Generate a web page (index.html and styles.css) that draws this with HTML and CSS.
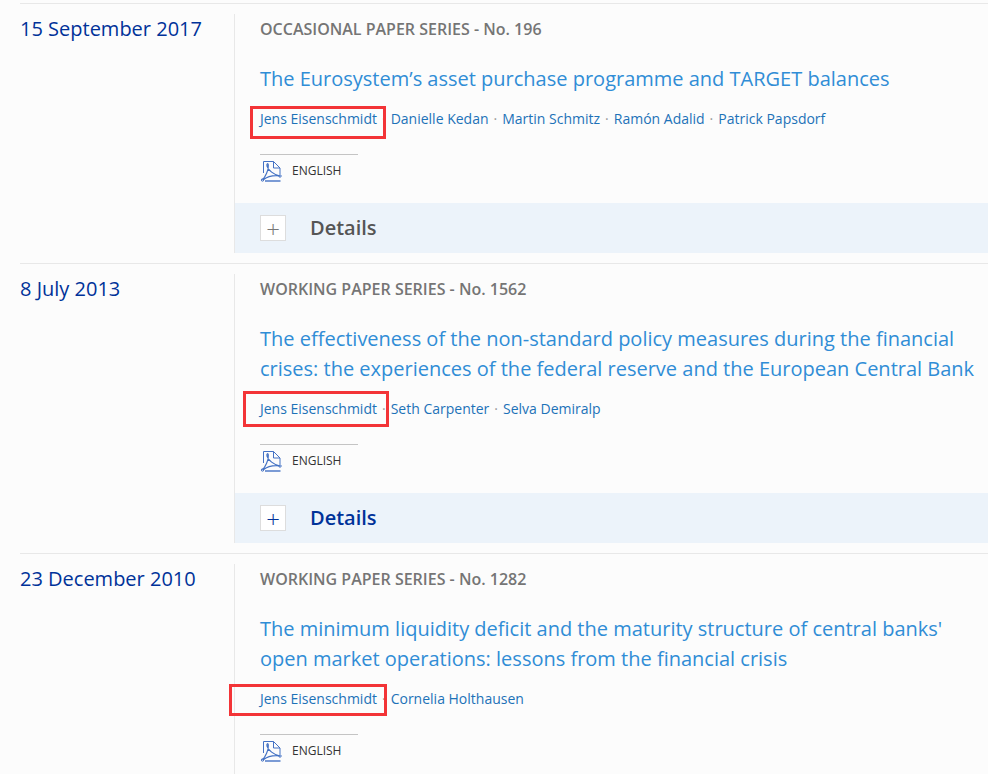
FILE: index.html
```html
<!DOCTYPE html>
<html lang="en">
<head>
<meta charset="utf-8">
<title>Publications</title>
<link rel="stylesheet" href="styles.css">
</head>
<body>
<svg class="defs" width="0" height="0" aria-hidden="true">
  <symbol id="pdf" viewBox="0 0 22 22">
    <path d="M3.500 13V1.500H13.500L20 8V14M13.500 1.500V8H20" fill="none" stroke="currentColor" stroke-width="1"/>
    <path d="M2.500 20C5 17 9 10 8.300 5C8 3 6.500 3.300 7 6C8 10 14 15 20 16M3 20C7 17 13 15 20 16" fill="none" stroke="currentColor" stroke-width="1.200"/>
    <circle cx="2.500" cy="20" r="1.200" fill="none" stroke="currentColor"/>
    <circle cx="20" cy="16" r="1.200" fill="none" stroke="currentColor"/>
    <path d="M5 21H20.500" stroke="currentColor" stroke-width="1.400"/>
  </symbol>
</svg>
<main class="list">
  <article class="item">
    <div class="date">15 September 2017</div>
    <div class="body">
      <div class="series">OCCASIONAL PAPER SERIES - No. 196</div>
      <h2 class="title">The Eurosystem’s asset purchase programme and TARGET balances</h2>
      <div class="authors">
        <a>Jens Eisenschmidt</a><span class="sep">·</span><a>Danielle Kedan</a><span class="sep">·</span><a>Martin Schmitz</a><span class="sep">·</span><a>Ramón Adalid</a><span class="sep">·</span><a>Patrick Papsdorf</a>
        <span class="mark mark-a"></span>
      </div>
      <div class="download"><svg class="pdf"><use href="#pdf"/></svg><span>ENGLISH</span></div>
      <div class="details"><span class="plus">+</span><span class="details-label">Details</span></div>
    </div>
  </article>
  <article class="item">
    <div class="date">8 July 2013</div>
    <div class="body">
      <div class="series">WORKING PAPER SERIES - No. 1562</div>
      <h2 class="title">The effectiveness of the non-standard policy measures during the financial crises: the experiences of the federal reserve and the European Central Bank</h2>
      <div class="authors">
        <a>Jens Eisenschmidt</a><span class="sep">·</span><a>Seth Carpenter</a><span class="sep">·</span><a>Selva Demiralp</a>
        <span class="mark mark-b"></span>
      </div>
      <div class="download"><svg class="pdf"><use href="#pdf"/></svg><span>ENGLISH</span></div>
      <div class="details details-active"><span class="plus">+</span><span class="details-label">Details</span></div>
    </div>
  </article>
  <article class="item">
    <div class="date">23 December 2010</div>
    <div class="body">
      <div class="series">WORKING PAPER SERIES - No. 1282</div>
      <h2 class="title">The minimum liquidity deficit and the maturity structure of central banks' open market operations: lessons from the financial crisis</h2>
      <div class="authors">
        <a>Jens Eisenschmidt</a><span class="sep">·</span><a>Cornelia Holthausen</a>
        <span class="mark mark-c"></span>
      </div>
      <div class="download"><svg class="pdf"><use href="#pdf"/></svg><span>ENGLISH</span></div>
    </div>
  </article>
</main>
</body>
</html>
```
FILE: styles.css
```css
* { box-sizing: border-box; }
html, body { height: 100%; }
body {
  margin: 0;
  height: 774px;
  overflow: hidden;
  background: #fcfcfc;
  font-family: "Open Sans", "Noto Sans", sans-serif;
}
.defs { position: absolute; }
.list { padding: 3px 0 0 20px; }
.item {
  display: flex;
  border-top: 1px solid #e8e8e8;
  padding-top: 10px;
  padding-bottom: 10px;
}
.date {
  width: 214px;
  flex: none;
  color: #003299;
  font-size: 20px;
  line-height: 30px;
}
.body {
  flex: 1;
  min-width: 0;
  border-left: 1px solid #e8e8e8;
}
.item:last-child .body { padding-bottom: 20px; }
.series {
  padding-left: 25px;
  font-size: 16px;
  font-weight: 600;
  line-height: 30px;
  color: #757575;
}
.title {
  margin: 20px 0 0;
  padding-left: 25px;
  font-size: 20px;
  font-weight: 400;
  line-height: 30px;
  color: #308dd6;
}
.authors {
  position: relative;
  margin-top: 15px;
  padding-left: 25px;
  font-size: 14px;
  line-height: 20px;
  color: #1d72b8;
}
.sep { margin: 0 5px; color: #999; }
.mark { position: absolute; border: 3px solid #f33437; }
.mark-a { left: 15px; top: -3px; width: 136px; height: 33px; }
.mark-b { left: 8px; top: -8px; width: 146px; height: 36px; }
.mark-c { left: -6px; top: -5px; width: 158px; height: 32px; }
.download {
  display: flex;
  align-items: center;
  width: 98px;
  height: 32px;
  margin: 25px 0 0 25px;
  border-top: 1px solid #c4c4c4;
  font-size: 12px;
  color: #333;
}
.pdf {
  width: 22px;
  height: 22px;
  margin-right: 10px;
  color: #4472c4;
}
.details {
  display: flex;
  align-items: center;
  height: 50px;
  margin-top: 17px;
  padding-left: 25px;
  background: #ecf3fa;
  font-size: 20px;
  font-weight: 600;
  color: #555;
}
.details-label { margin-bottom: 2px; }
.plus {
  display: flex;
  align-items: center;
  justify-content: center;
  width: 26px;
  height: 26px;
  margin-right: 24px;
  border: 1px solid #ddd;
  background: #fff;
  font-size: 24px;
  font-weight: 300;
  color: #777;
}
.details-active { color: #003299; }
.details-active .plus { color: #003299; }
```
